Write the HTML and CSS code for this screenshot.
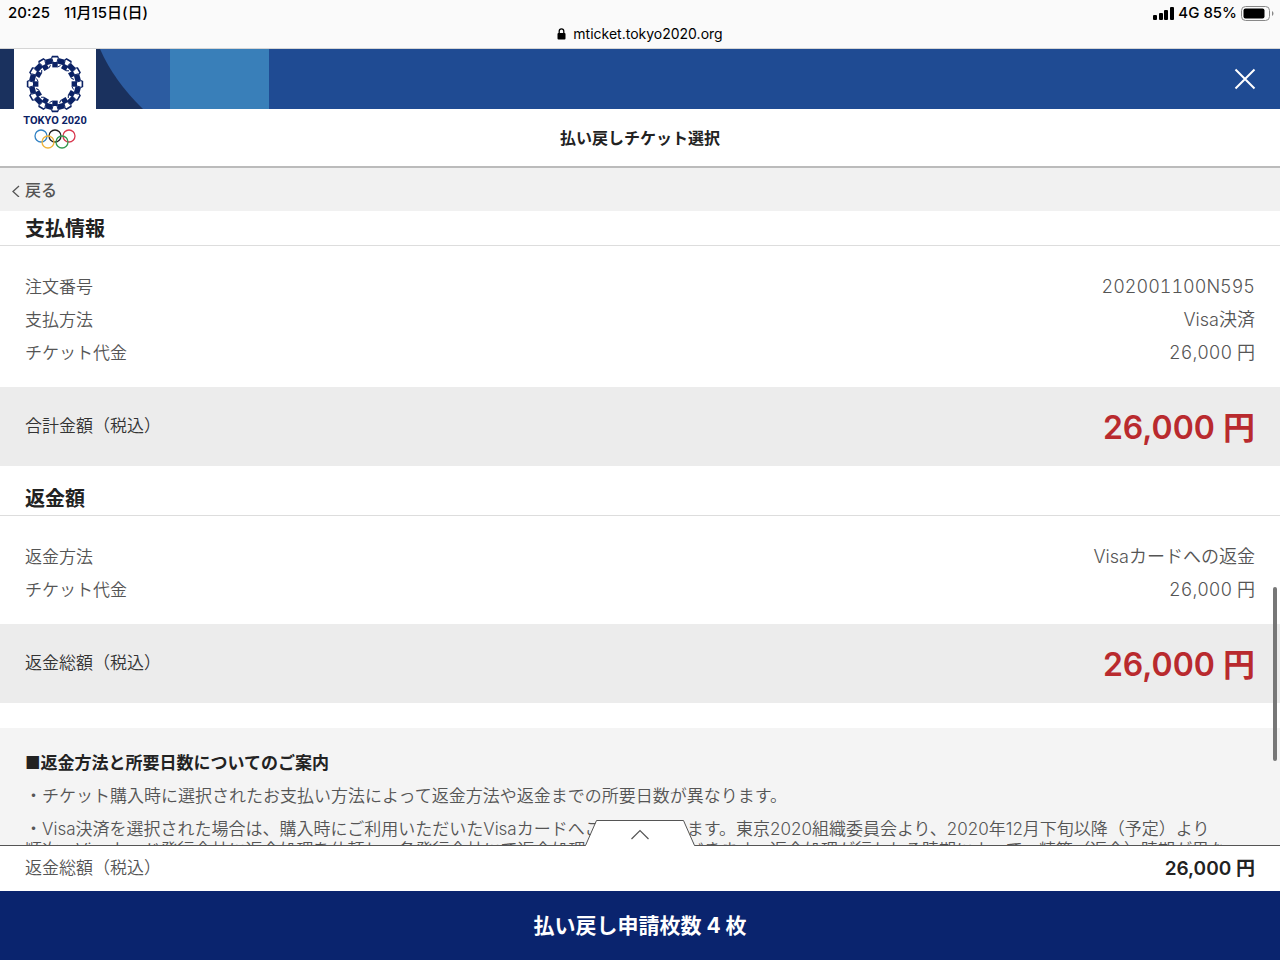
FILE: index.html
```html
<!DOCTYPE html>
<html lang="ja">
<head>
  <meta charset="UTF-8">
  <meta name="viewport" content="width=device-width, initial-scale=1.0">
  <title>払い戻しチケット選択</title>
  <link rel="stylesheet" href="styles.css">
</head>
<body>
  <div class="browser-bar">
    <div class="status">
      <div class="status-left"><span>20:25</span><span>11月15日(日)</span></div>
      <div class="status-right">
        <svg width="21" height="13" viewBox="0 0 21 13">
          <rect x="0" y="8" width="4" height="5" rx="1"/>
          <rect x="6" y="6" width="4" height="7" rx="1"/>
          <rect x="11" y="3" width="4" height="10" rx="1"/>
          <rect x="17" y="0" width="4" height="13" rx="1"/>
        </svg>
        <span>4G</span>
        <span>85%</span>
        <svg width="33" height="15" viewBox="0 0 33 15">
          <rect x="0.5" y="0.5" width="28" height="14" rx="4" fill="none" stroke="#888"/>
          <rect x="2.5" y="2.5" width="21" height="10" rx="2"/>
          <path d="M31 5c2 1 2 4 0 5z" fill="#888"/>
        </svg>
      </div>
    </div>
    <div class="url">
      <svg width="9" height="12" viewBox="0 0 9 12">
        <rect x="0.5" y="5" width="8" height="6.5" rx="1"/>
        <path d="M2.2 6V3.2a2.3 2.3 0 0 1 4.6 0V6" fill="none" stroke="#000" stroke-width="1.3"/>
      </svg>
      <span>mticket.tokyo2020.org</span>
    </div>
  </div>

  <header class="header">
    <svg class="header-art" width="269" height="60" viewBox="0 0 269 60">
      <rect width="143" height="60" fill="#1a315e"/>
      <path d="M100 0Q114 32 143 60H170V0Z" fill="#2c5ca1"/>
      <rect x="170" width="99" height="60" fill="#397fb9"/>
    </svg>
    <a class="logo" href="#">
      <svg width="62" height="58" viewBox="-31 -29 62 58" fill="#0b2265">
        <defs>
          <g id="cell">
            <rect x="-2.7" y="-22" width="5.4" height="5.4"/>
            <rect x="-3.4" y="-26" width="6.8" height="5.6" transform="rotate(15)"/>
            <path d="M-4 -26L-3 -28.200H3L4 -26L3 -25.200L2.400 -26.600H-2.400L-3 -25.200Z"/>
            <path d="M-3 -25.500L-2 -22M3 -25.500L2 -22M2.700 -17L5.500 -18.500" stroke="#0b2265" stroke-width="1"/>
          </g>
        </defs>
        <use href="#cell"/>
        <use href="#cell" transform="rotate(30)"/>
        <use href="#cell" transform="rotate(60)"/>
        <use href="#cell" transform="rotate(90)"/>
        <use href="#cell" transform="rotate(120)"/>
        <use href="#cell" transform="rotate(150)"/>
        <use href="#cell" transform="rotate(180)"/>
        <use href="#cell" transform="rotate(210)"/>
        <use href="#cell" transform="rotate(240)"/>
        <use href="#cell" transform="rotate(270)"/>
        <use href="#cell" transform="rotate(300)"/>
        <use href="#cell" transform="rotate(330)"/>
      </svg>
      <span class="logo-text">TOKYO 2020</span>
      <svg width="42" height="20" viewBox="0 0 42 20" fill="none" stroke-width="1.3">
        <circle cx="7" cy="7" r="6" stroke="#3282c4"/>
        <circle cx="21" cy="7" r="6" stroke="#222"/>
        <circle cx="35" cy="7" r="6" stroke="#d9384f"/>
        <circle cx="14" cy="13" r="6" stroke="#efb43b"/>
        <circle cx="28" cy="13" r="6" stroke="#34994f"/>
      </svg>
    </a>
    <button class="close-button" aria-label="閉じる">
      <svg width="22" height="22" viewBox="0 0 22 22"><path d="M1.5 1.5L20.5 20.5M20.5 1.5L1.5 20.5" fill="none" stroke="#fff" stroke-width="2"/></svg>
    </button>
  </header>

  <h1 class="page-title">払い戻しチケット選択</h1>

  <nav class="back-bar">
    <a class="back-link" href="#">
      <svg width="8" height="12" viewBox="0 0 8 12"><path d="M7 1L1 6.500L7 12" fill="none" stroke="#555" stroke-width="1.3"/></svg>
      <span>戻る</span>
    </a>
  </nav>

  <main class="content">
    <!-- Payment -->
    <section>
      <h2 class="section-title section-title-first">支払情報</h2>
      <dl class="details">
        <div class="row"><dt>注文番号</dt><dd>202001100N595</dd></div>
        <div class="row"><dt>支払方法</dt><dd>Visa決済</dd></div>
        <div class="row"><dt>チケット代金</dt><dd>26,000 円</dd></div>
      </dl>
      <div class="total"><span>合計金額（税込）</span><strong class="total-price">26,000 円</strong></div>
    </section>

    <!-- Refund -->
    <section>
      <h2 class="section-title">返金額</h2>
      <dl class="details">
        <div class="row"><dt>返金方法</dt><dd>Visaカードへの返金</dd></div>
        <div class="row"><dt>チケット代金</dt><dd>26,000 円</dd></div>
      </dl>
      <div class="total"><span>返金総額（税込）</span><strong class="total-price">26,000 円</strong></div>
    </section>

    <section class="notes">
      <h3>■返金方法と所要日数についてのご案内</h3>
      <p>・チケット購入時に選択されたお支払い方法によって返金方法や返金までの所要日数が異なります。</p>
      <p>・Visa決済を選択された場合は、購入時にご利用いただいたVisaカードへご返金いたします。東京2020組織委員会より、2020年12月下旬以降（予定）より<br>順次、Visaカード発行会社に返金処理を依頼し、各発行会社にて返金処理を行っていただきます。返金処理が行われる時期によって、精算（返金）時期が異な</p>
    </section>
    <div class="scroll-thumb"></div>
  </main>

  <footer class="footer">
    <button class="drawer-tab" aria-label="明細を開く">
      <svg width="112" height="27" viewBox="0 0 112 27">
        <path d="M0 27V25.500H1.500L12.500 1H99.500L110.500 25.500H112V27Z" fill="#fff"/>
        <path d="M0 25.500H1.500L12.500 0.500H99.500L110.500 25.500H112" fill="none" stroke="#555"/>
        <path d="M47.500 19L56 10.500L64.500 19" fill="none" stroke="#555" stroke-width="1.2"/>
      </svg>
    </button>
    <div class="summary"><span>返金総額（税込）</span><strong>26,000 円</strong></div>
    <button class="submit-button">払い戻し申請枚数 4 枚</button>
  </footer>
</body>
</html>
```
FILE: styles.css
```css
* {
  box-sizing: border-box;
}

body {
  font-family: Inter, "Noto Sans CJK JP", sans-serif;
  font-size: 17px;
  font-weight: 350;
  color: #555;
  background-color: #fff;
  display: flex;
  flex-direction: column;
  height: 100vh;
  margin: 0;
  overflow: hidden;
}

h1, h2, h3, p, dl, dd {
  margin: 0;
}

button {
  font-family: inherit;
  border: none;
  padding: 0;
  cursor: pointer;
}

svg {
  display: block;
  flex: none;
}

a {
  color: inherit;
  text-decoration: none;
}

/* Status bar and address */
.browser-bar {
  color: #000;
  background-color: #fafafa;
  border-bottom: 1px solid #d5d5d5;
  height: 49px;
  flex: none;
}

.status {
  display: flex;
  justify-content: space-between;
  padding: 2px 6px 0 8px;
  font-size: 15px;
  font-weight: 500;
  line-height: 22px;
}

.status-left {
  display: flex;
  gap: 14px;
}

.status-right {
  display: flex;
  align-items: center;
  gap: 4px;
}

.url {
  display: flex;
  align-items: center;
  justify-content: center;
  gap: 7px;
  font-size: 14px;
  font-weight: 400;
  line-height: 20px;
}

.header {
  position: relative;
  display: flex;
  justify-content: space-between;
  align-items: center;
  height: 60px;
  flex: none;
  background-color: #1f4b93;
}

.logo {
  position: absolute;
  top: 0;
  left: 14px;
  width: 82px;
  height: 106px;
  padding-top: 6px;
  background-color: #fff;
  display: flex;
  flex-direction: column;
  align-items: center;
}

.logo-text {
  font-family: Roboto, sans-serif;
  font-size: 11px;
  font-weight: 700;
  line-height: 16px;
  color: #0b2265;
}

.close-button {
  background: none;
  margin-right: 24px;
}

.page-title {
  flex: none;
  color: #222;
  font-size: 16px;
  font-weight: 700;
  line-height: 55px;
  padding-top: 2px;
  text-align: center;
  border-bottom: 2px solid #bbb;
}

.back-bar {
  flex: none;
  height: 43px;
  padding: 2px 12px 0;
  background-color: #f1f1f1;
}

.back-link {
  display: inline-flex;
  align-items: center;
  gap: 5px;
  font-size: 16px;
  font-weight: 500;
  line-height: 41px;
}

.content {
  position: relative;
  flex: 1;
  min-height: 0;
  overflow: hidden;
}

.section-title {
  color: #222;
  font-size: 20px;
  font-weight: 700;
  line-height: 32px;
  padding: 17px 25px 0;
  border-bottom: 1px solid #ddd;
}

.section-title-first {
  padding-top: 2px;
}

.details {
  padding: 25px 25px 18px;
  display: flex;
  flex-direction: column;
  gap: 1px;
}

.row {
  display: flex;
  justify-content: space-between;
  line-height: 32px;
}

.row dd {
  font-size: 18px;
  font-variant-numeric: tabular-nums;
}

.total {
  display: flex;
  align-items: center;
  justify-content: space-between;
  height: 79px;
  padding: 0 25px 4px;
  color: #333;
  background-color: #ececec;
}

.total-price {
  color: #b92a2e;
  font-size: 32px;
  font-weight: 600;
}

.notes {
  margin-top: 25px;
  padding: 25px;
  background-color: #f4f4f4;
  line-height: 21px;
}

.notes h3 {
  color: #222;
  font-size: 17px;
  font-weight: 700;
}

.notes p {
  margin-top: 12px;
  white-space: nowrap;
}

.scroll-thumb {
  position: absolute;
  top: 376px;
  right: 3px;
  width: 4px;
  height: 174px;
  border-radius: 2px;
  background-color: #777;
}

/* Fixed total and submit */
.footer {
  position: relative;
  flex: none;
}

.drawer-tab {
  position: absolute;
  top: -25px;
  left: 50%;
  transform: translateX(-50%);
  background: none;
}

.summary {
  display: flex;
  align-items: center;
  justify-content: space-between;
  height: 46px;
  padding: 0 25px 4px;
  border-top: 1px solid #555;
  background-color: #fff;
}

.summary strong {
  color: #222;
  font-size: 19px;
  font-weight: 600;
}

.submit-button {
  display: block;
  width: 100%;
  height: 69px;
  padding-bottom: 4px;
  color: #fff;
  background-color: #0a246e;
  font-size: 21px;
  font-weight: 700;
}
```
